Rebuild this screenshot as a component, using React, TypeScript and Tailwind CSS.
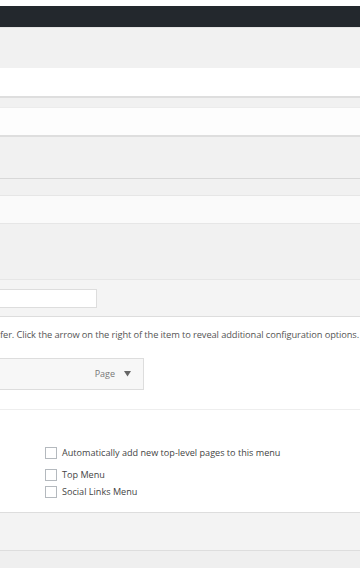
const font = { fontFamily: '"Open Sans", "Liberation Sans", sans-serif' };

function Check({ label, className }: { label: string; className?: string }) {
  return (
    <label className={`flex items-center gap-[5px] ${className ?? ''}`}>
      <span className="w-[12px] h-[12px] border border-[#b4b9be] bg-white shrink-0" />
      <span className="text-[9.1px] leading-[12px] text-[#444]">{label}</span>
    </label>
  );
}

export default function App() {
  return (
    <div className="w-[360px] h-[568px] overflow-hidden bg-[#efefef] flex flex-col" style={font}>
      {/* admin bar */}
      <div className="h-[6px] bg-white" />
      <div className="h-[21px] bg-[#23282d]" />
      <div className="h-[41px] bg-[#f1f1f1] border-t border-[#e4e4e4]" />
      <div className="h-[30px] bg-white border-b-2 border-[#dedede]" />
      <div className="h-[9px] bg-[#f1f1f1]" />
      <div className="h-[30px] bg-[#fdfdfd] border-t border-[#ececec] border-b-2 border-b-[#dedede]" />
      <div className="h-[42px] bg-[#f1f1f1] border-b border-[#d8d8d8]" />
      <div className="h-[16px] bg-[#f1f1f1]" />
      <div className="h-[29px] bg-[#fafafa] border-y border-[#e6e6e6]" />
      <div className="h-[56px] bg-[#f1f1f1] border-b border-[#e6e6e6]" />

      {/* menu name header */}
      <div className="h-[37px] bg-[#f4f4f4] border-b border-[#dddddd] pt-[9px]">
        <div className="w-[97px] h-[19px] bg-white border border-l-0 border-[#dddddd]" />
      </div>

      {/* menu structure */}
      <div className="h-[93px] bg-white border-b border-[#eeeeee] pt-[12px]">
        <p className="text-[9.3px] leading-[12px] text-[#555] whitespace-nowrap tracking-[-0.1px]">
          fer. Click the arrow on the right of the item to reveal additional configuration options.
        </p>
        <div className="mt-[17px] w-[144px] h-[32px] bg-[#f7f7f7] border border-l-0 border-[#dddddd] flex items-center justify-end pr-[12px] gap-[9px]">
          <span className="text-[9px] text-[#777]">Page</span>
          <svg width="7" height="6" viewBox="0 0 7 6">
            <path d="M0 0h7L3.5 5.5z" fill="#666" />
          </svg>
        </div>
      </div>

      {/* menu settings */}
      <div className="h-[103px] bg-white border-b border-[#dddddd] pl-[45px] pt-[37px]">
        <Check label="Automatically add new top-level pages to this menu" />
        <Check label="Top Menu" className="mt-[10px]" />
        <Check label="Social Links Menu" className="mt-[5px]" />
      </div>

      <div className="h-[38px] bg-[#f3f3f3] border-b border-[#dddddd]" />
      <div className="flex-1 bg-[#efefef]" />
    </div>
  );
}
